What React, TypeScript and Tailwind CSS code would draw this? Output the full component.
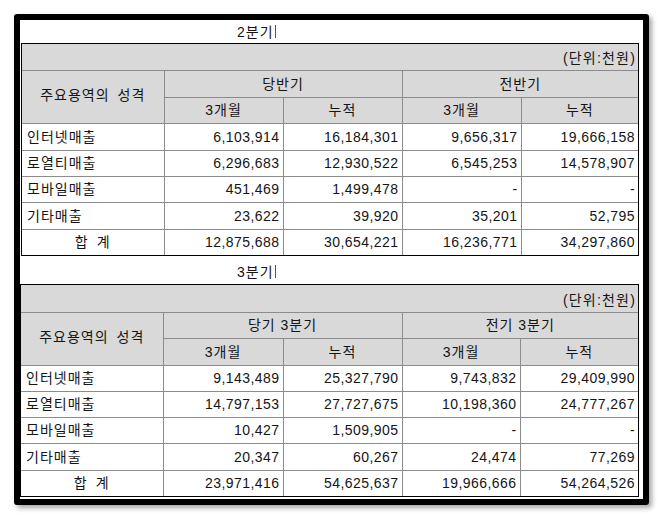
const FONT = "font-['Liberation_Sans','Noto_Sans_CJK_KR',sans-serif]";

type Row = { label: string; v: string[]; total?: boolean };

type Sheet = {
  title: string;
  left: string;
  right: string;
  widths: number[];
  heights: number[];
  shift: string;
  width: string;
  rows: Row[];
};

const sheets: Sheet[] = [
  {
    title: '2분기',
    left: '당반기',
    right: '전반기',
    widths: [142, 119, 119, 119, 117],
    heights: [26, 27, 26, 27, 26, 26, 27, 26],
    shift: 'ml-[1px]',
    width: 'w-[618px]',
    rows: [
      { label: '인터넷매출', v: ['6,103,914', '16,184,301', '9,656,317', '19,666,158'] },
      { label: '로열티매출', v: ['6,296,683', '12,930,522', '6,545,253', '14,578,907'] },
      { label: '모바일매출', v: ['451,469', '1,499,478', '-', '-'] },
      { label: '기타매출', v: ['23,622', '39,920', '35,201', '52,795'] },
      { label: '합\u2002계', v: ['12,875,688', '30,654,221', '16,236,771', '34,297,860'], total: true },
    ],
  },
  {
    title: '3분기',
    left: '당기\u00a03분기',
    right: '전기\u00a03분기',
    widths: [142, 120, 119, 118, 118],
    heights: [27, 26, 27, 26, 26, 26, 27, 26],
    shift: 'ml-0',
    width: 'w-[619px]',
    rows: [
      { label: '인터넷매출', v: ['9,143,489', '25,327,790', '9,743,832', '29,409,990'] },
      { label: '로열티매출', v: ['14,797,153', '27,727,675', '10,198,360', '24,777,267'] },
      { label: '모바일매출', v: ['10,427', '1,509,905', '-', '-'] },
      { label: '기타매출', v: ['20,347', '60,267', '24,474', '77,269'] },
      { label: '합\u2002계', v: ['23,971,416', '54,625,637', '19,966,666', '54,264,526'], total: true },
    ],
  },
];

const cell = 'border border-[#8c8c8c] p-0 align-middle';

function SalesTable({ s }: { s: Sheet }) {
  const h = s.heights;
  return (
    <div className={`${s.shift} ${s.width} border border-black`}>
      <table className="w-full table-fixed border-collapse border-hidden">
        <colgroup>
          {s.widths.map((w, i) => (
            <col key={i} style={{ width: w }} />
          ))}
        </colgroup>
        <tbody>
          <tr style={{ height: h[0] }} className="bg-[#d9d9d9]">
            <td colSpan={5} className={`${cell} pr-[2px] pt-[3px] text-right tracking-[1.2px]`}>
              (단위:천원)
            </td>
          </tr>
          <tr style={{ height: h[1] }} className="bg-[#d9d9d9] tracking-[1px]">
            <td rowSpan={2} className={`${cell} pb-[3px] text-center`}>
              주요용역의{'\u2002'}성격
            </td>
            <td colSpan={2} className={`${cell} text-center`}>
              {s.left}
            </td>
            <td colSpan={2} className={`${cell} text-center`}>
              {s.right}
            </td>
          </tr>
          <tr style={{ height: h[2] }} className="bg-[#d9d9d9] tracking-[1px]">
            {['3개월', '누적', '3개월', '누적'].map((t, i) => (
              <td key={i} className={`${cell} text-center`}>
                {t}
              </td>
            ))}
          </tr>
          {s.rows.map((r, ri) => (
            <tr key={r.label} style={{ height: h[3 + ri] }} className="bg-white">
              <td className={`${cell} tracking-[1px] ${r.total ? 'text-center' : 'pl-[5px] text-left'}`}>
                {r.label}
              </td>
              {r.v.map((v, i) => (
                <td key={i} className={`${cell} pr-[3px] text-right`}>
                  {v}
                </td>
              ))}
            </tr>
          ))}
        </tbody>
      </table>
    </div>
  );
}

export default function App() {
  return (
    <div className={`min-h-[520px] w-[663px] bg-white pl-[14px] pt-[14px] ${FONT} text-[14px] leading-[16px] tracking-[0.45px] text-[#151515]`}>
      <div className="h-[491px] w-[635px] rounded-[3px] border-[6px] border-black bg-white shadow-[3px_3px_5px_rgba(0,0,0,0.35)]">
        {sheets.map((s) => (
          <div key={s.title}>
            <div className={`flex items-center pl-[217px] tracking-[1px] ${s.title === '2분기' ? 'h-[23px]' : 'h-[28px] pt-[3px]'}`}>
              <span>{s.title}</span>
              <span className="ml-[1px] inline-block h-[13px] w-px bg-[#555]" />
            </div>
            <SalesTable s={s} />
          </div>
        ))}
      </div>
    </div>
  );
}
